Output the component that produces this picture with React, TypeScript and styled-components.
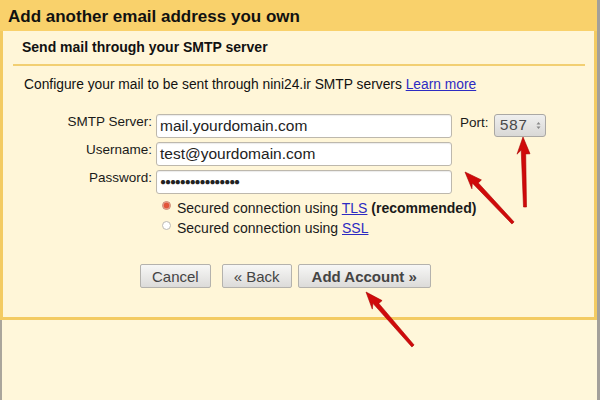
import React, { FC } from "react";
import styled, { createGlobalStyle } from "styled-components";

const GlobalStyle = createGlobalStyle`
  html, body {
    margin: 0;
    padding: 0;
    background: #fff7da;
  }
  * {
    box-sizing: border-box;
  }
`;

const Page = styled.div`
  position: relative;
  width: 600px;
  height: 400px;
  display: flex;
  flex-direction: column;
  background: #fff7da;
  border-right: 3px solid #a3a09a;
  font-family: "Liberation Sans", Arial, sans-serif;
  color: #111;
  overflow: hidden;
`;

const Dialog = styled.div`
  flex: none;
  border: 3px solid #f3cb62;
  border-top: none;
  background: #fff6d8;
  padding-bottom: 29px;
`;

const Filler = styled.div`
  flex: 1;
  border-left: 2px solid #aaa69c;
`;

const TitleBar = styled.div`
  height: 31px;
  margin: 0 -3px;
  padding: 2px 0 0 8px;
  background: #f9d16b;
  font-size: 17px;
  font-weight: bold;
  line-height: 29px;
  color: #111;
`;

const Section = styled.div`
  padding: 8px 0 9px 19px;
  font-size: 14px;
  font-weight: bold;
  line-height: 16px;
`;

const Rule = styled.div`
  height: 2px;
  margin: 0 9px 0 10px;
  background: #f2cf72;
`;

const Intro = styled.p`
  margin: 11px 0 0 21px;
  font-size: 13.8px;
  line-height: 16px;
`;

const Link = styled.a`
  color: #2d2bc2;
  text-decoration: underline;
  cursor: pointer;
`;

const Form = styled.div`
  display: grid;
  grid-template-columns: 149px 296px auto;
  column-gap: 4px;
  row-gap: 4px;
  margin-top: 21px;
  align-items: start;
`;

const Label = styled.label`
  justify-self: end;
  font-size: 13.5px;
  line-height: 16px;
  color: #1a1a1a;
`;

const TextInput = styled.div<{ $password?: boolean }>`
  height: 24px;
  padding: 0 3px;
  background: #fff;
  border: 1px solid #bdb8ad;
  border-radius: 3px;
  box-shadow: inset 0 1px 1px rgba(0, 0, 0, 0.08);
  font-size: ${(p) => (p.$password ? "10px" : "15.5px")};
  letter-spacing: ${(p) => (p.$password ? "-1.1px" : "0")};
  line-height: 22px;
  color: #222;
  white-space: nowrap;
  overflow: hidden;
`;

const PortCell = styled.div`
  display: flex;
  align-items: flex-start;
  gap: 5px;
  padding-left: 4px;
`;

const PortLabel = styled.span`
  font-size: 13.5px;
  line-height: 16px;
  padding-top: 1px;
  color: #1a1a1a;
`;

const PortBox = styled.div`
  width: 52px;
  height: 23px;
  display: flex;
  align-items: center;
  justify-content: space-between;
  padding: 0 4px 0 5px;
  border: 1px solid #aaa8a4;
  border-radius: 3px;
  background: linear-gradient(#efefee, #d9d8d6);
  font-family: "Liberation Mono", "Courier New", monospace;
  font-size: 15.5px;
  color: #4a4a4a;
`;

const Radios = styled.div`
  grid-column: 2 / 4;
  margin-top: 0;
  padding-left: 6px;
  display: flex;
  flex-direction: column;
`;

const RadioRow = styled.div`
  display: flex;
  align-items: center;
  gap: 6px;
  height: 20px;
  font-size: 14px;
  color: #1a1a1a;
`;

const RadioDot = styled.span<{ $checked?: boolean }>`
  width: 9px;
  height: 9px;
  margin-top: -5px;
  border-radius: 50%;
  border: 1px solid ${(p) => (p.$checked ? "#c9806c" : "#bdbab3")};
  background: ${(p) =>
    p.$checked
      ? "radial-gradient(circle at 50% 50%, #e2553a 0, #e2553a 2.6px, #f4c0b2 3.4px, #f8e6de 4.5px)"
      : "#fff"};
`;

const Buttons = styled.div`
  display: flex;
  gap: 6px;
  margin-top: 26px;
  padding-left: 137px;
`;

const Button = styled.button<{ $primary?: boolean; $spaced?: boolean }>`
  height: 24px;
  padding: 0 ${(p) => (p.$primary ? "13px" : "11px")};
  margin-right: ${(p) => (p.$spaced ? "5px" : "0")};
  border: 1px solid #b4b2ad;
  border-radius: 2px;
  background: linear-gradient(#f7f7f6, #dcdbd9);
  font-family: "Liberation Sans", Arial, sans-serif;
  font-size: 15px;
  font-weight: ${(p) => (p.$primary ? "bold" : "normal")};
  color: #444;
  cursor: pointer;
`;

const Overlay = styled.svg`
  position: absolute;
  left: 0;
  top: 0;
  pointer-events: none;
`;

type Pt = [number, number];

// red pointer arrow from tail to tip, shaft slightly thinner at the tail
function arrowPoints(tail: Pt, tip: Pt): string {
  const dx = tip[0] - tail[0];
  const dy = tip[1] - tail[1];
  const len = Math.hypot(dx, dy);
  const ux = dx / len;
  const uy = dy / len;
  const nx = -uy;
  const ny = ux;
  const headLen = 17;
  const headHalf = 6.5;
  const base: Pt = [tip[0] - ux * headLen, tip[1] - uy * headLen];
  const neck: Pt = [tip[0] - ux * (headLen - 4), tip[1] - uy * (headLen - 4)];
  const pts: Pt[] = [
    [tail[0] + nx * 1.5, tail[1] + ny * 1.5],
    [base[0] + nx * 2.2, base[1] + ny * 2.2],
    [base[0] + nx * headHalf, base[1] + ny * headHalf],
    tip,
    [base[0] - nx * headHalf, base[1] - ny * headHalf],
    [neck[0] - nx * 2.2, neck[1] - ny * 2.2],
    [tail[0] - nx * 1.5, tail[1] - ny * 1.5],
  ];
  return pts.map((p) => `${p[0].toFixed(1)},${p[1].toFixed(1)}`).join(" ");
}

const arrows: { tail: Pt; tip: Pt }[] = [
  { tail: [513, 223], tip: [465, 172] },
  { tail: [525, 207], tip: [523, 137] },
  { tail: [413, 346], tip: [366, 292] },
];

const App: FC = (): JSX.Element => {
  return (
    <>
      <GlobalStyle />
      <Page>
        <Dialog>
          <TitleBar>Add another email address you own</TitleBar>
          <Section>Send mail through your SMTP server</Section>
          <Rule />
          <Intro>
            Configure your mail to be sent through nini24.ir SMTP servers{" "}
            <Link>Learn more</Link>
          </Intro>

          <Form>
            <Label>SMTP Server:</Label>
            <TextInput>mail.yourdomain.com</TextInput>
            <PortCell>
              <PortLabel>Port:</PortLabel>
              <PortBox>
                <span>587</span>
                <svg width="5" height="9" viewBox="0 0 5 9">
                  <path d="M0.5 3.5 L2.5 1 L4.5 3.5 Z M0.5 5.5 L2.5 8 L4.5 5.5 Z" fill="#888" />
                </svg>
              </PortBox>
            </PortCell>

            <Label>Username:</Label>
            <TextInput>test@yourdomain.com</TextInput>
            <span />

            <Label>Password:</Label>
            <TextInput $password>{"\u25CF".repeat(16)}</TextInput>
            <span />

            <Radios>
              <RadioRow>
                <RadioDot $checked />
                <span>
                  Secured connection using <Link>TLS</Link>{" "}
                  <b>(recommended)</b>
                </span>
              </RadioRow>
              <RadioRow>
                <RadioDot />
                <span>
                  Secured connection using <Link>SSL</Link>
                </span>
              </RadioRow>
            </Radios>
          </Form>

          <Buttons>
            <Button $spaced>Cancel</Button>
            <Button>« Back</Button>
            <Button $primary>Add Account »</Button>
          </Buttons>
        </Dialog>
        <Filler />

        <Overlay width="600" height="400" viewBox="0 0 600 400">
          {arrows.map((a, i) => (
            <polygon
              key={i}
              points={arrowPoints(a.tail, a.tip)}
              fill="#d00a0a"
              stroke="#a80000"
              strokeWidth="0.6"
              strokeLinejoin="round"
            />
          ))}
        </Overlay>
      </Page>
    </>
  );
};

export default App;
